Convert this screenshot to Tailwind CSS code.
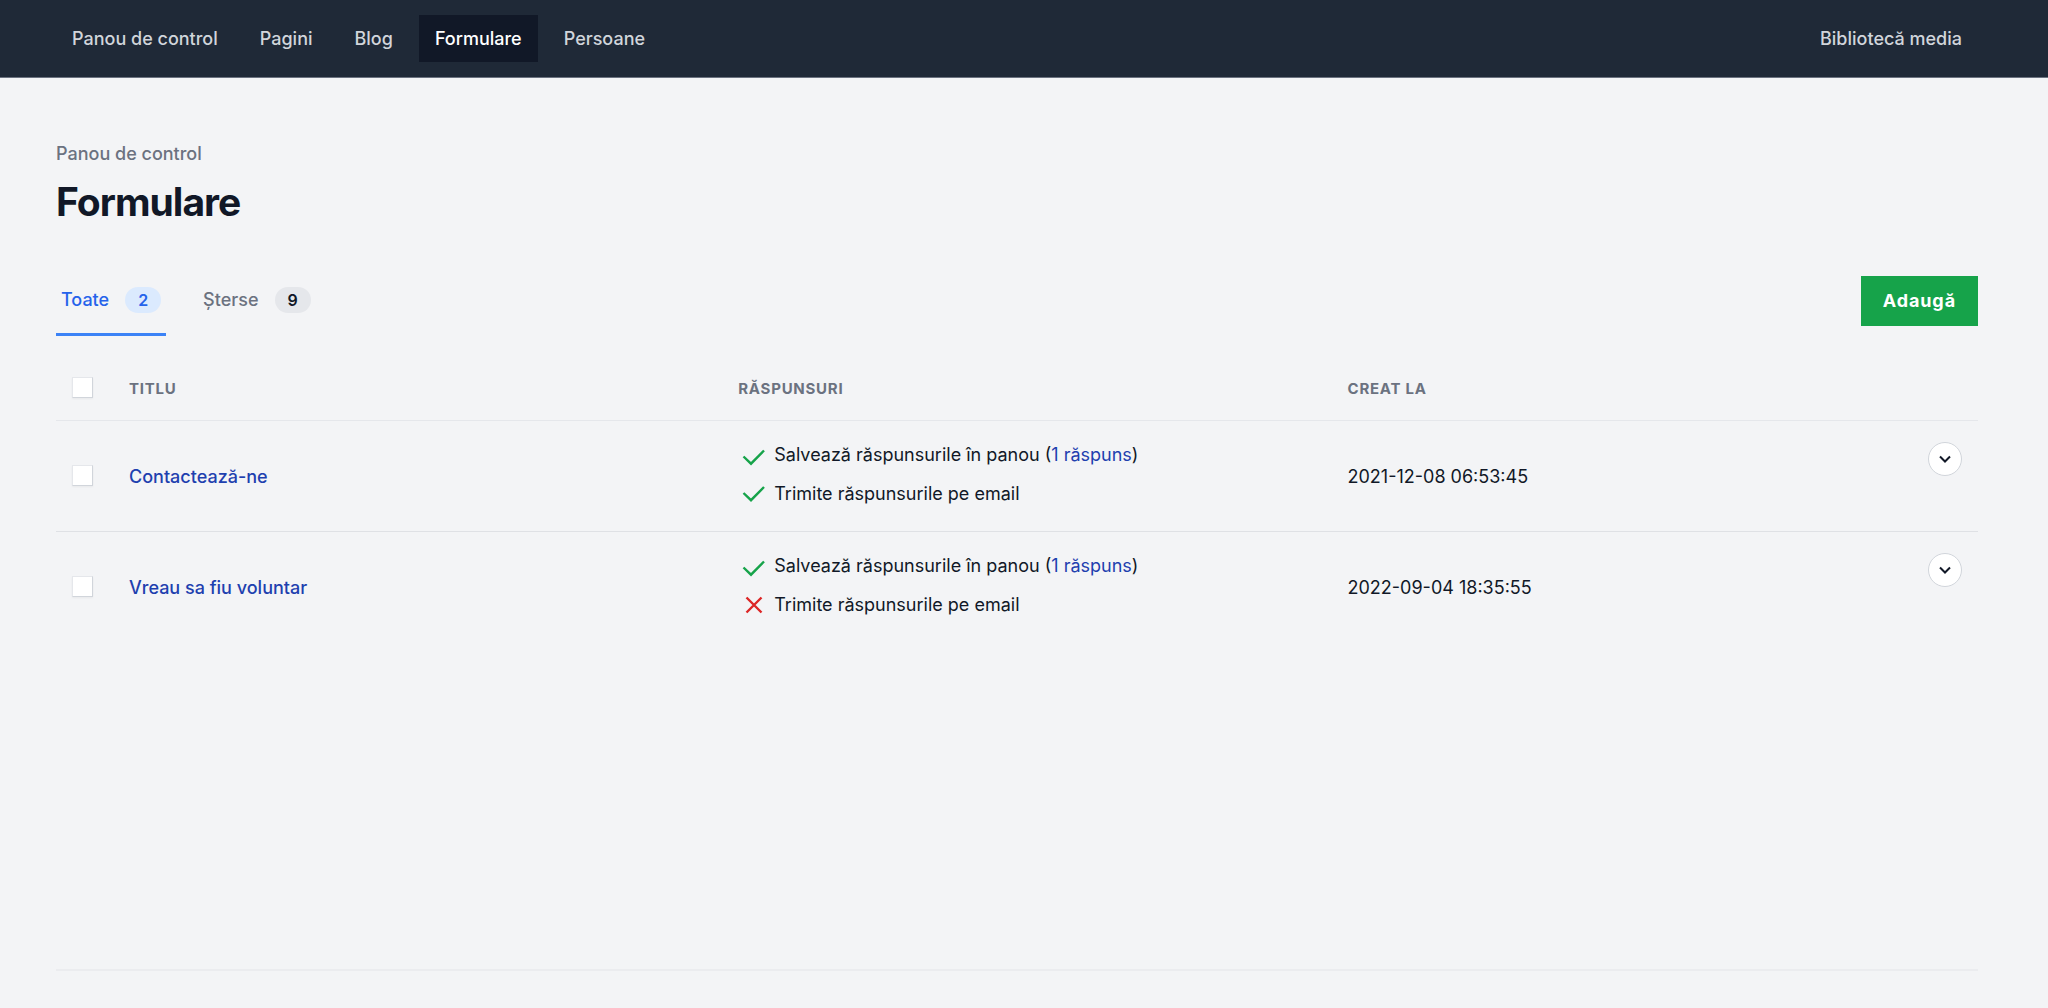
<!DOCTYPE html>
<html lang="ro">
<head>
<meta charset="utf-8">
<title>Formulare</title>
<script src="https://cdn.jsdelivr.net/npm/@tailwindcss/browser@4"></script>
</head>
<body class="min-h-screen flex flex-col bg-[#f3f4f6] font-['Inter',sans-serif] text-[18px] leading-6 text-[#111827]">
<header class="bg-[#1f2937] border-b border-[#6b7280]">
  <nav class="flex items-center justify-between pl-14 pr-[70px] py-[15px] font-medium text-[#d1d5db]">
    <div class="flex gap-[10px]">
      <a href="#" class="px-4 pt-3 pb-[11px]">Panou de control</a>
      <a href="#" class="px-4 pt-3 pb-[11px]">Pagini</a>
      <a href="#" class="px-4 pt-3 pb-[11px]">Blog</a>
      <a href="#" aria-current="page" class="px-4 pt-3 pb-[11px] bg-[#111827] text-white">Formulare</a>
      <a href="#" class="px-4 pt-3 pb-[11px]">Persoane</a>
    </div>
    <a href="#" class="px-4 pt-3 pb-[11px]">Bibliotecă media</a>
  </nav>
</header>
<main class="grow flex flex-col pl-14 pr-[70px] pt-16">
  <a href="#" class="self-start font-medium text-[#6b7280]">Panou de control</a>
  <h1 class="mt-3 text-[39px] leading-[48px] font-bold tracking-tight">Formulare</h1>

  <div class="mt-[50px] flex items-start justify-between">
    <div class="flex gap-8 font-medium">
      <a href="#" class="flex items-center gap-4 px-[5px] pt-[11px] pb-5 border-b-3 border-[#3b82f6] text-[#2563eb]">Toate
        <span class="rounded-full bg-[#dbeafe] px-[13px] py-px text-base leading-6 font-semibold">2</span></a>
      <a href="#" class="flex items-center gap-4 px-[5px] pt-[11px] pb-5 border-b-3 border-transparent text-[#6b7280]">Șterse
        <span class="rounded-full bg-[#e5e7eb] px-[13px] py-px text-base leading-6 font-semibold text-[#111827]">9</span></a>
    </div>
    <button type="button" class="h-[50px] px-[22px] bg-[#16a34a] text-white font-bold tracking-wider">Adaugă</button>
  </div>

  <table class="mt-5 w-full table-fixed text-left">
    <colgroup><col class="w-[57px]"><col class="w-[31.7%]"><col class="w-[31.7%]"><col><col class="w-[66px]"></colgroup>
    <thead>
      <tr class="h-16 border-b border-[#e5e7eb] text-[15px] uppercase tracking-wider text-[#6b7280]">
        <th class="pl-4"><input type="checkbox" aria-label="Selectează tot" class="block size-[21px] appearance-none bg-white border border-[#d1d5db] border-t-[#e5e7eb] border-l-[#e5e7eb] shadow-xs"></th>
        <th class="px-4 pt-[2px] font-bold">Titlu</th>
        <th class="px-4 pt-[2px] font-bold">Răspunsuri</th>
        <th class="px-4 pt-[2px] font-bold">Creat la</th>
        <th></th>
      </tr>
    </thead>
    <tbody>
      <tr class="h-[111px] border-b border-[#dfe1e5]">
        <td class="pl-4"><input type="checkbox" aria-label="Selectează Contactează-ne" class="block size-[21px] appearance-none bg-white border border-[#d1d5db] border-t-[#e5e7eb] border-l-[#e5e7eb] shadow-xs"></td>
        <td class="px-4 pt-[2px]"><a href="#" class="font-medium text-[#1e40af]">Contactează-ne</a></td>
        <td class="px-4 pb-[2px]">
          <div class="flex flex-col gap-[15px]">
            <div class="flex gap-2"><svg class="size-7 -mb-6" viewBox="0 0 28 28" fill="none" stroke="#16a34a" stroke-width="2.4"><path d="M5.500 13.500l7.500 7.200L26 7.500"/></svg><span>Salvează răspunsurile în panou (<a href="#" class="text-[#1e40af]">1 răspuns</a>)</span></div>
            <div class="flex gap-2"><svg class="size-7 -mb-6" viewBox="0 0 28 28" fill="none" stroke="#16a34a" stroke-width="2.4"><path d="M5.500 11l7.500 7.200L26 5"/></svg><span>Trimite răspunsurile pe email</span></div>
          </div>
        </td>
        <td class="px-4 pt-[2px]">2021-12-08 06:53:45</td>
        <td class="px-4 pt-[21px] align-top"><button type="button" aria-label="Acțiuni" class="flex size-[34px] items-center justify-center rounded-full border border-[#d1d5db] bg-white"><svg class="size-4" viewBox="0 0 16 16" fill="none" stroke="#111827" stroke-width="2"><path d="M3 5.500l5 5 5-5"/></svg></button></td>
      </tr>
      <tr class="h-[111px]">
        <td class="pl-4"><input type="checkbox" aria-label="Selectează Vreau sa fiu voluntar" class="block size-[21px] appearance-none bg-white border border-[#d1d5db] border-t-[#e5e7eb] border-l-[#e5e7eb] shadow-xs"></td>
        <td class="px-4 pt-[2px]"><a href="#" class="font-medium text-[#1e40af]">Vreau sa fiu voluntar</a></td>
        <td class="px-4 pb-[2px]">
          <div class="flex flex-col gap-[15px]">
            <div class="flex gap-2"><svg class="size-7 -mb-6" viewBox="0 0 28 28" fill="none" stroke="#16a34a" stroke-width="2.4"><path d="M5.500 13.500l7.500 7.200L26 7.500"/></svg><span>Salvează răspunsurile în panou (<a href="#" class="text-[#1e40af]">1 răspuns</a>)</span></div>
            <div class="flex gap-2"><svg class="size-7 -mb-6" viewBox="0 0 28 28" fill="none" stroke="#dc2626" stroke-width="2.4"><path d="M8.500 4.500l15 15M23.500 4.500l-15 15"/></svg><span>Trimite răspunsurile pe email</span></div>
          </div>
        </td>
        <td class="px-4 pt-[2px]">2022-09-04 18:35:55</td>
        <td class="px-4 pt-[21px] align-top"><button type="button" aria-label="Acțiuni" class="flex size-[34px] items-center justify-center rounded-full border border-[#d1d5db] bg-white"><svg class="size-4" viewBox="0 0 16 16" fill="none" stroke="#111827" stroke-width="2"><path d="M3 5.500l5 5 5-5"/></svg></button></td>
      </tr>
    </tbody>
  </table>
  <footer class="mt-auto h-[39px] border-t-2 border-[#ebecef]"></footer>
</main>
</body>
</html>
